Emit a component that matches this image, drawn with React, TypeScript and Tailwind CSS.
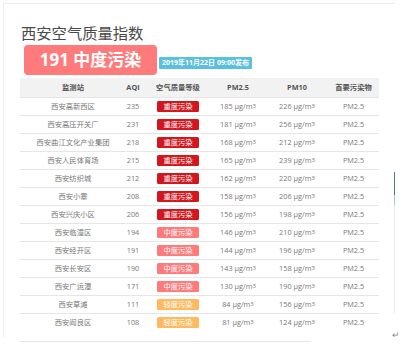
const rows: [string, number, 0 | 1 | 2, number, number][] = [
  ["西安高新西区", 235, 0, 185, 226],
  ["西安高压开关厂", 231, 0, 181, 256],
  ["西安曲江文化产业集团", 218, 0, 168, 212],
  ["西安人民体育场", 215, 0, 165, 239],
  ["西安纺织城", 212, 0, 162, 220],
  ["西安小寨", 208, 0, 158, 206],
  ["西安兴庆小区", 206, 0, 156, 198],
  ["西安临潼区", 194, 1, 146, 210],
  ["西安经开区", 191, 1, 144, 196],
  ["西安长安区", 190, 1, 143, 158],
  ["西安广运潭", 171, 1, 130, 190],
  ["西安草滩", 111, 2, 84, 156],
  ["西安阎良区", 108, 2, 81, 124],
];

const levels = [
  { label: "重度污染", cls: "bg-[#d3161d]" },
  { label: "中度污染", cls: "bg-[#ff7b7b]" },
  { label: "轻度污染", cls: "bg-[#ffba5f]" },
];

const cols = "grid grid-cols-[100px_26px_64px_56px_62px_51px]";

function Unit({ v }: { v: number }) {
  return (
    <span>
      {v} μg/m<sup className="text-[6px] relative -top-[1px]">3</sup>
    </span>
  );
}

export default function App() {
  return (
    <div
      className="relative w-[404px] h-[350px] bg-white overflow-hidden"
      style={{ fontFamily: '"Open Sans", "Noto Sans CJK SC", sans-serif' }}
    >
      <div className="ml-[3px] mt-[3px] w-[392px] h-[334px] border-l border-t border-[#f1ece8] pl-[16px] pt-[19px]">
        <h1 className="pl-[1px] text-[15.3px] leading-[20px] text-[#4a4a4a] font-normal">西安空气质量指数</h1>

        <div className="mt-[2px] flex items-end gap-[2px]">
          <div className="ml-[4px] w-[133px] h-[30px] rounded-[4px] bg-[#ff7b7b] flex items-center justify-center text-white font-bold text-[17px]">
            191 中度污染
          </div>
          <div className="mb-[6px] h-[12px] px-[2px] rounded-[1px] bg-[#5bc0de] text-white font-bold text-[7px] leading-[12px] w-[93px] text-center">
            2019年11月22日 09:00发布
          </div>
        </div>

        <div className="mt-[3px] w-[359px] text-[7.3px]">
          <div className={`${cols} h-[19px] items-center bg-[#f2f2f2] font-bold text-[#555] text-center`}>
            <span className="pl-[6px]">监测站</span>
            <span>AQI</span>
            <span>空气质量等级</span>
            <span>PM2.5</span>
            <span>PM10</span>
            <span>首要污染物</span>
          </div>
          {rows.map(([name, aqi, lv, pm25, pm10]) => (
            <div
              key={name}
              className={`${cols} h-[18px] items-center border-t border-[#e6e6e6] text-[#777] text-center`}
            >
              <span className="pl-[6px] whitespace-nowrap">{name}</span>
              <span>{aqi}</span>
              <span className="flex justify-center">
                <span
                  className={`${levels[lv].cls} w-[42px] h-[11px] rounded-[1.5px] text-white text-[7.3px] leading-[11px]`}
                >
                  {levels[lv].label}
                </span>
              </span>
              <Unit v={pm25} />
              <Unit v={pm10} />
              <span>PM2.5</span>
            </div>
          ))}
          <div className="mt-[10px] w-[291px] border-t border-[#e6e6e6]" />
        </div>
      </div>

      <div className="absolute left-[394px] top-[172px] w-px h-[141px] bg-[#ececec]">
        <div className="h-[23px] bg-[#4a78b0]" />
        <div className="h-[10px] bg-[#a9c4e2]" />
      </div>
      <span className="absolute left-[392px] top-[328px] text-[9px] text-[#888]">↵</span>
    </div>
  );
}
